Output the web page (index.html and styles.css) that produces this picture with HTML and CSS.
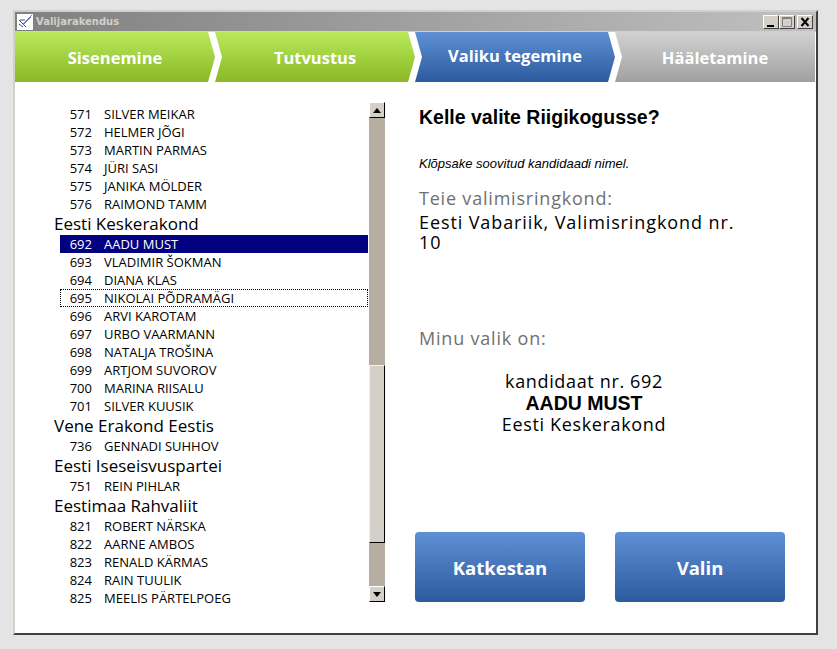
FILE: index.html
```html
<!DOCTYPE html>
<html lang="et">
<head>
    <meta charset="UTF-8">
    <title>Valijarakendus</title>
    <link rel="stylesheet" href="styles.css">
</head>
<body>
    <div class="window">
        <!-- Title bar -->
        <div class="titlebar">
            <svg class="app-icon" width="16" height="16" viewBox="0 0 16 16">
                <rect width="16" height="16" fill="#fff"/>
                <path d="M15 1 6 10M14 3 7 10" stroke="#6a78c0" stroke-width="1" fill="none"/>
                <path d="M2 6 9 13M2 10 6 13 M3 6 8 6" stroke="#3a4a90" stroke-width="1" fill="none"/>
            </svg>
            <span class="title-text">Valijarakendus</span>
            <div class="win-buttons">
                <span class="win-btn"><svg width="14" height="12" viewBox="0 0 14 12"><rect x="3" y="9" width="7" height="2" fill="#000"/></svg></span>
                <span class="win-btn win-btn-off"><svg width="14" height="12" viewBox="0 0 14 12"><path d="M2.5 1.5h9v9h-9zM2.5 2.5h9" stroke="#808080" fill="none"/></svg></span>
                <span class="win-btn win-btn-close"><svg width="14" height="12" viewBox="0 0 14 12"><path d="M3.5 2 10.5 10M10.5 2 3.5 10" stroke="#000" stroke-width="2" fill="none"/></svg></span>
            </div>
        </div>

        <!-- Steps -->
        <nav class="steps">
            <div class="step step-first step-done">Sisenemine</div>
            <div class="step step-done">Tutvustus</div>
            <div class="step step-active">Valiku tegemine</div>
            <div class="step step-last step-todo">Hääletamine</div>
        </nav>

        <main class="content">
            <!-- Candidate list -->
            <section class="list-pane">
                <div class="list">
                    <div class="row"><span class="num">571</span><span>SILVER MEIKAR</span></div>
                    <div class="row"><span class="num">572</span><span>HELMER JÕGI</span></div>
                    <div class="row"><span class="num">573</span><span>MARTIN PARMAS</span></div>
                    <div class="row"><span class="num">574</span><span>JÜRI SASI</span></div>
                    <div class="row"><span class="num">575</span><span>JANIKA MÖLDER</span></div>
                    <div class="row"><span class="num">576</span><span>RAIMOND TAMM</span></div>
                    <div class="party">Eesti Keskerakond</div>
                    <div class="row row-selected"><span class="num">692</span><span>AADU MUST</span></div>
                    <div class="row"><span class="num">693</span><span>VLADIMIR ŠOKMAN</span></div>
                    <div class="row"><span class="num">694</span><span>DIANA KLAS</span></div>
                    <div class="row row-focus"><span class="num">695</span><span>NIKOLAI PÕDRAMÄGI</span></div>
                    <div class="row"><span class="num">696</span><span>ARVI KAROTAM</span></div>
                    <div class="row"><span class="num">697</span><span>URBO VAARMANN</span></div>
                    <div class="row"><span class="num">698</span><span>NATALJA TROŠINA</span></div>
                    <div class="row"><span class="num">699</span><span>ARTJOM SUVOROV</span></div>
                    <div class="row"><span class="num">700</span><span>MARINA RIISALU</span></div>
                    <div class="row"><span class="num">701</span><span>SILVER KUUSIK</span></div>
                    <div class="party">Vene Erakond Eestis</div>
                    <div class="row"><span class="num">736</span><span>GENNADI SUHHOV</span></div>
                    <div class="party">Eesti Iseseisvuspartei</div>
                    <div class="row"><span class="num">751</span><span>REIN PIHLAR</span></div>
                    <div class="party">Eestimaa Rahvaliit</div>
                    <div class="row"><span class="num">821</span><span>ROBERT NÄRSKA</span></div>
                    <div class="row"><span class="num">822</span><span>AARNE AMBOS</span></div>
                    <div class="row"><span class="num">823</span><span>RENALD KÄRMAS</span></div>
                    <div class="row"><span class="num">824</span><span>RAIN TUULIK</span></div>
                    <div class="row"><span class="num">825</span><span>MEELIS PÄRTELPOEG</span></div>
                </div>

                <!-- Scrollbar -->
                <div class="scrollbar">
                    <span class="scroll-btn"><span class="arrow-up"></span></span>
                    <div class="scroll-track">
                        <div class="scroll-thumb"></div>
                    </div>
                    <span class="scroll-btn"><span class="arrow-down"></span></span>
                </div>
            </section>

            <!-- Selection -->
            <section class="detail">
                <h1 class="question">Kelle valite Riigikogusse?</h1>
                <p class="hint">Klõpsake soovitud kandidaadi nimel.</p>
                <p class="label">Teie valimisringkond:</p>
                <p class="district">Eesti Vabariik, Valimisringkond nr. 10</p>
                <p class="label label-choice">Minu valik on:</p>
                <div class="choice">
                    <div>kandidaat nr. 692</div>
                    <div class="choice-name">AADU MUST</div>
                    <div>Eesti Keskerakond</div>
                </div>
                <div class="actions">
                    <button class="action-btn">Katkestan</button>
                    <button class="action-btn">Valin</button>
                </div>
            </section>
        </main>
    </div>
</body>
</html>
```

FILE: styles.css
```css
/* Base Reset */
* {
    margin: 0;
    padding: 0;
    box-sizing: border-box;
}

body {
    background-color: #e4e4e4;
    font-family: "Liberation Sans", Arial, sans-serif;
    color: #000;
    height: 649px;
    overflow: hidden;
}

/* Window */
.window {
    width: 805px;
    height: 625px;
    margin: 10px 0 0 13px;
    background: #fff;
    border: 2px solid #d4d0c8;
    border-right-color: #404040;
    border-bottom-color: #404040;
    display: flex;
    flex-direction: column;
}

.titlebar {
    height: 20px;
    flex: none;
    display: flex;
    align-items: center;
    padding: 0 3px 0 2px;
    background: linear-gradient(to right, #808080, #c0c0c0);
    border-bottom: 1px solid #d4d0c8;
}

.app-icon {
    flex: none;
}

.title-text {
    margin-left: 3px;
    font-family: "DejaVu Sans", sans-serif;
    font-size: 10px;
    font-weight: bold;
    color: #d4d0c8;
}

.win-buttons {
    margin-left: auto;
    display: flex;
}

.win-btn {
    width: 16px;
    height: 14px;
    background: #d4d0c8;
    border: 1px solid;
    border-color: #fff #404040 #404040 #fff;
    display: flex;
    align-items: center;
    justify-content: center;
}

.win-btn-close {
    margin-left: 2px;
}

/* Steps */
.steps {
    flex: none;
    display: grid;
    grid-template-columns: repeat(4, 200px);
    height: 50px;
}

.step {
    display: flex;
    align-items: center;
    justify-content: center;
    color: #fff;
    font-family: "Open Sans", sans-serif;
    font-size: 16.5px;
    font-weight: 700;
    clip-path: polygon(0 0, calc(100% - 7px) 0, 100% 50%, calc(100% - 7px) 100%, 0 100%, 7px 50%);
}

.step-first {
    clip-path: polygon(0 0, calc(100% - 7px) 0, 100% 50%, calc(100% - 7px) 100%, 0 100%);
}

.step-last {
    clip-path: polygon(0 0, 100% 0, 100% 100%, 0 100%, 7px 50%);
}

.step-done {
    background: linear-gradient(#b9e95a, #8ab826);
}

.step-active {
    background: linear-gradient(#5f90d5, #2c5a9e);
    padding-bottom: 4px;
}

.step-todo {
    background: linear-gradient(#d2d2d2, #a0a0a0);
}

/* Content */
.content {
    flex: 1;
    display: flex;
    min-height: 0;
}

.list-pane {
    width: 370px;
    flex: none;
    display: flex;
    align-items: flex-start;
    margin-top: 20px;
    padding-left: 39px;
}

.list {
    width: 315px;
    height: 498px;
    margin-top: 3px;
    overflow: hidden;
    font-family: "Open Sans", sans-serif;
}

.row {
    display: flex;
    height: 18px;
    line-height: 18px;
    margin-left: 6px;
    width: 308px;
    font-size: 13px;
}

.num {
    width: 32px;
    margin-right: 12px;
    text-align: right;
}

.row-selected {
    background: #000080;
    color: #fff;
}

.row-focus {
    outline: 1px dotted #000;
    outline-offset: -1px;
}

.party {
    height: 22px;
    line-height: 22px;
    font-size: 17px;
}

/* Scrollbar */
.scrollbar {
    width: 16px;
    height: 500px;
    flex: none;
    display: flex;
    flex-direction: column;
}

.scroll-btn {
    height: 16px;
    flex: none;
    background: #d4d0c8;
    border: 1px solid;
    border-color: #fff #000 #000 #fff;
    display: flex;
    align-items: center;
    justify-content: center;
}

.arrow-up {
    border: 4px solid transparent;
    border-top: 0;
    border-bottom: 5px solid #000;
}

.arrow-down {
    border: 4px solid transparent;
    border-bottom: 0;
    border-top: 5px solid #000;
}

.scroll-track {
    flex: 1;
    background: #b5aea1;
    padding-top: 247px;
}

.scroll-thumb {
    height: 178px;
    background: #d4d0c8;
    border: 1px solid;
    border-color: #f4f2ee #000 #000 #f4f2ee;
}

/* Detail */
.detail {
    flex: 1;
    padding: 24px 30px 0 34px;
    display: flex;
    flex-direction: column;
}

.question {
    font-size: 19.5px;
    line-height: 22px;
    font-weight: bold;
}

.hint {
    margin-top: 29px;
    font-size: 13px;
    line-height: 14px;
    font-style: italic;
}

.label,
.district,
.choice {
    font-family: "Open Sans", sans-serif;
    font-size: 18px;
}

.label {
    margin-top: 17px;
    line-height: 20px;
    letter-spacing: 0.8px;
    color: #707070;
}

.district {
    margin-top: 4px;
    line-height: 20px;
    letter-spacing: 0.9px;
    width: 330px;
}

.label-choice {
    margin-top: 76px;
}

.choice {
    margin-top: 23px;
    width: 330px;
    text-align: center;
    line-height: 21px;
    letter-spacing: 0.65px;
}

.choice-name {
    font-family: "Liberation Sans", Arial, sans-serif;
    font-size: 19.5px;
    font-weight: bold;
    line-height: 22px;
    letter-spacing: 0;
}

.actions {
    margin-top: auto;
    margin-bottom: 31px;
    margin-left: -4px;
    display: flex;
    gap: 30px;
}

.action-btn {
    width: 170px;
    height: 70px;
    border: none;
    border-radius: 4px;
    background: linear-gradient(#5f90d5, #2c5a9e);
    color: #fff;
    font-family: "Open Sans", sans-serif;
    font-size: 18.5px;
    font-weight: 700;
}
```
